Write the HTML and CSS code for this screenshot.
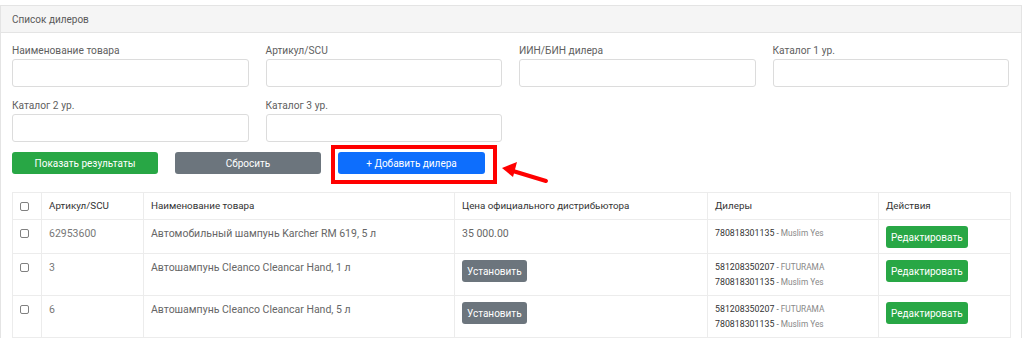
FILE: index.html
```html
<!DOCTYPE html>
<html lang="ru">
<head>
    <meta charset="UTF-8">
    <title>Список дилеров</title>
    <link rel="stylesheet" href="styles.css">
</head>
<body>
    <div class="card">
        <div class="card-header">Список дилеров</div>
        <div class="card-body">
            <!-- Filters -->
            <div class="filters">
                <div class="field">
                    <label>Наименование товара</label>
                    <input type="text">
                </div>
                <div class="field">
                    <label>Артикул/SCU</label>
                    <input type="text">
                </div>
                <div class="field">
                    <label>ИИН/БИН дилера</label>
                    <input type="text">
                </div>
                <div class="field">
                    <label>Каталог 1 ур.</label>
                    <input type="text">
                </div>
                <div class="field">
                    <label>Каталог 2 ур.</label>
                    <input type="text">
                </div>
                <div class="field">
                    <label>Каталог 3 ур.</label>
                    <input type="text">
                </div>
            </div>

            <div class="actions">
                <button class="btn btn-green">Показать результаты</button>
                <button class="btn btn-gray">Сбросить</button>
                <div class="highlight">
                    <button class="btn btn-blue">+ Добавить дилера</button>
                    <svg class="arrow" width="50" height="26" viewBox="0 0 50 26">
                        <line x1="12" y1="9" x2="45" y2="19" stroke="#f00" stroke-width="4" stroke-linecap="round"/>
                        <polygon points="1,6 16,0 12,15" fill="#f00"/>
                    </svg>
                </div>
            </div>

            <!-- Dealers table -->
            <table class="table">
                <colgroup>
                    <col style="width: 29px">
                    <col style="width: 102px">
                    <col style="width: 311px">
                    <col style="width: 253px">
                    <col style="width: 171px">
                    <col style="width: 132px">
                </colgroup>
                <thead>
                    <tr>
                        <th><input type="checkbox" class="check"></th>
                        <th>Артикул/SCU</th>
                        <th>Наименование товара</th>
                        <th>Цена официального дистрибьютора</th>
                        <th>Дилеры</th>
                        <th>Действия</th>
                    </tr>
                </thead>
                <tbody>
                    <tr>
                        <td><input type="checkbox" class="check"></td>
                        <td class="muted">62953600</td>
                        <td>Автомобильный шампунь Karcher RM 619, 5 л</td>
                        <td>35 000.00</td>
                        <td>
                            <div class="dealer"><b>780818301135</b> - <span>Muslim Yes</span></div>
                        </td>
                        <td><button class="btn btn-sm btn-green">Редактировать</button></td>
                    </tr>
                    <tr>
                        <td><input type="checkbox" class="check"></td>
                        <td class="muted">3</td>
                        <td>Автошампунь Cleanco Cleancar Hand, 1 л</td>
                        <td><button class="btn btn-sm btn-gray">Установить</button></td>
                        <td>
                            <div class="dealer"><b>581208350207</b> - <span>FUTURAMA</span></div>
                            <div class="dealer"><b>780818301135</b> - <span>Muslim Yes</span></div>
                        </td>
                        <td><button class="btn btn-sm btn-green">Редактировать</button></td>
                    </tr>
                    <tr>
                        <td><input type="checkbox" class="check"></td>
                        <td class="muted">6</td>
                        <td>Автошампунь Cleanco Cleancar Hand, 5 л</td>
                        <td><button class="btn btn-sm btn-gray">Установить</button></td>
                        <td>
                            <div class="dealer"><b>581208350207</b> - <span>FUTURAMA</span></div>
                            <div class="dealer"><b>780818301135</b> - <span>Muslim Yes</span></div>
                        </td>
                        <td><button class="btn btn-sm btn-green">Редактировать</button></td>
                    </tr>
                </tbody>
            </table>
        </div>
    </div>
</body>
</html>
```

FILE: styles.css
```css
body {
    font-family: Roboto, "Liberation Sans", sans-serif;
    font-size: 10px;
    color: #555;
    margin: 0;
    padding: 5px 2px 0 0;
    background-color: #fff;
}
.card {
    border: 1px solid #e4e4e4;
    border-bottom: none;
    background-color: #fff;
}
.card-header {
    background-color: #f5f5f5;
    border-bottom: 1px solid #e4e4e4;
    padding: 0 11px;
    height: 26px;
    line-height: 27px;
    color: #5a5a5a;
}
.card-body {
    padding: 11px 11px 0 11px;
}
.filters {
    display: grid;
    grid-template-columns: repeat(4, 1fr);
    column-gap: 17px;
    row-gap: 12px;
    margin-right: 1px;
}
.field label {
    display: block;
    font-size: 10.2px;
    line-height: 13px;
    margin-bottom: 2px;
    color: #606060;
}
.field input {
    display: block;
    width: 100%;
    height: 28px;
    box-sizing: border-box;
    border: 1px solid #dcdcdc;
    border-radius: 3px;
    margin: 0;
}
.actions {
    display: flex;
    align-items: center;
    gap: 17px;
    margin-top: 10px;
    margin-bottom: 18px;
}
.btn {
    font-family: inherit;
    font-size: 10px;
    color: #fff;
    border: none;
    border-radius: 3px;
    height: 22px;
    width: 146px;
    padding: 0;
    cursor: pointer;
}
.btn-green {
    background-color: #28a745;
}
.btn-gray {
    background-color: #6c757d;
}
.btn-blue {
    background-color: #0d6efd;
    width: 147px;
}
.highlight {
    position: relative;
}
.highlight::after {
    content: "";
    position: absolute;
    left: -7px;
    top: -7px;
    right: -12px;
    bottom: -10px;
    border: 4px solid #f00;
}
.arrow {
    position: absolute;
    left: 163px;
    top: 10px;
}
.table {
    width: 998px;
    border-collapse: collapse;
    table-layout: fixed;
}
.table th,
.table td {
    border: 1px solid #ececec;
    padding: 6px 7px 5px;
    line-height: 15px;
    text-align: left;
    vertical-align: top;
    font-weight: normal;
}
.table th {
    color: #333;
    font-size: 9.8px;
    line-height: 14px;
    padding-bottom: 6px;
}
.table td {
    color: #666;
    font-size: 10.5px;
}
.table td.muted {
    color: #777;
}
.check {
    -webkit-appearance: none;
    appearance: none;
    width: 9px;
    height: 9px;
    border: 1px solid #808080;
    border-radius: 2px;
    margin: 3px 0 0 0;
    display: block;
}
.btn-sm {
    width: auto;
    font-size: 10px;
    padding: 0 5px;
}
.dealer {
    font-size: 8.3px;
}
.dealer b {
    font-weight: normal;
    color: #333;
    font-size: 8.8px;
}
.dealer span {
    color: #888;
}
```
